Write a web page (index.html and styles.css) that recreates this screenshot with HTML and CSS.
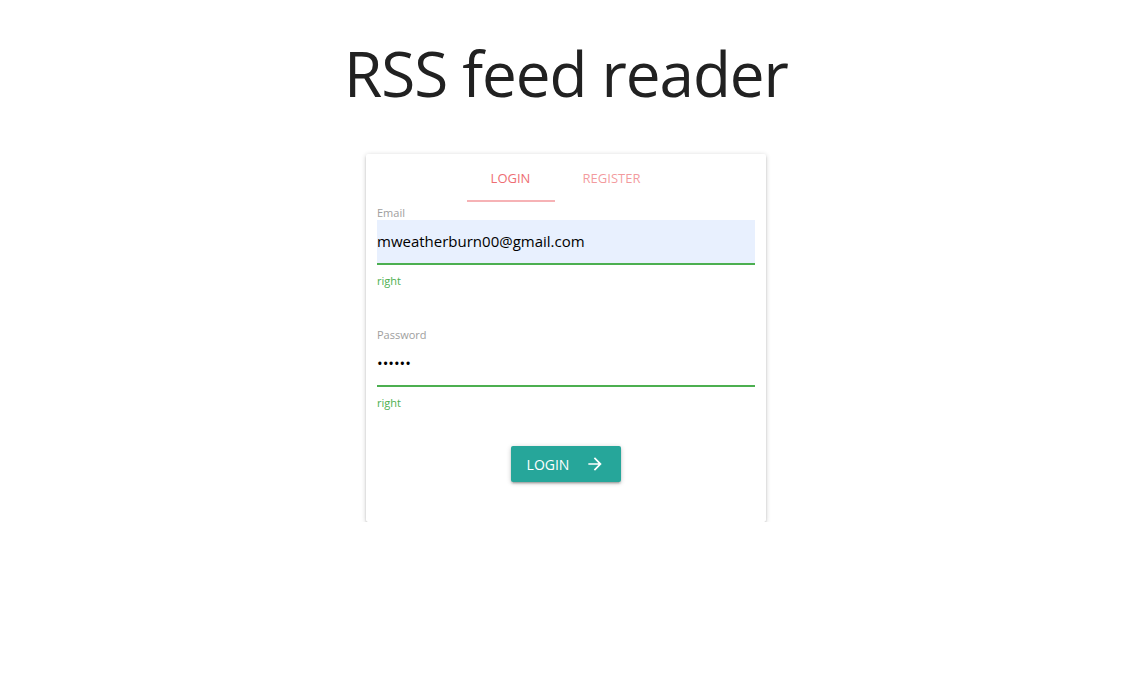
FILE: index.html
```html
<!DOCTYPE html>
<html>
<head>
<meta charset="utf-8">
<link rel="stylesheet" href="styles.css">
</head>
<body>
<main class="page">
  <h1 class="title">RSS feed reader</h1>
  <section class="card">
    <nav class="tabs">
      <div class="tab active">Login</div>
      <div class="tab">Register</div>
    </nav>
    <form class="form">
      <div class="field">
        <label class="label">Email</label>
        <div class="input autofill">mweatherburn00@gmail.com</div>
        <span class="helper">right</span>
      </div>
      <div class="field pw">
        <label class="label">Password</label>
        <div class="input dots">••••••</div>
        <span class="helper">right</span>
      </div>
      <div class="actions">
        <button type="button" class="btn">Login
          <svg class="arrow" viewBox="0 0 24 24" width="20" height="20"><path d="M12 4l-1.41 1.41L16.17 11H4v2h12.17l-5.58 5.59L12 20l8-8z" fill="#fff"/></svg>
        </button>
      </div>
    </form>
  </section>
</main>
</body>
</html>
```
FILE: styles.css
```css
html, body { margin: 0; padding: 0; background: #fff; }
body { font-family: "Open Sans", "Noto Sans", sans-serif; color: rgba(0,0,0,0.87); }
.page { display: flex; flex-direction: column; align-items: center; padding-right: 1px; }
.title {
  margin: 34px 0 0;
  font-size: 62px;
  font-weight: 400;
  line-height: 78px;
  height: 120px;
  letter-spacing: -1.05px;
  color: #212121;
}
.card {
  width: 400px;
  box-sizing: border-box;
  background: #fff;
  box-shadow: 0 2px 2px 0 rgba(0,0,0,0.14), 0 3px 1px -2px rgba(0,0,0,0.12), 0 1px 5px 0 rgba(0,0,0,0.2);
  border-radius: 2px;
  padding-bottom: 40px;
}
.tabs { display: flex; justify-content: center; height: 48px; padding-left: 3px; }
.tab {
  text-transform: uppercase;
  font-size: 13px;
  line-height: 48px;
  color: rgba(238,110,115,0.7);
  box-sizing: border-box;
  text-align: center;
  width: 114px;
}
.tab.active { color: #ee6e73; border-bottom: 2px solid #f6b2b5; width: 88px; }
.form { padding: 0 11px; }
.field { display: flex; flex-direction: column; }
.label { font-size: 11px; color: #9e9e9e; height: 16px; line-height: 16px; margin-top: 3px; }
.input {
  height: 43px;
  line-height: 43px;
  font-size: 15px;
  color: #000;
  border-bottom: 2px solid #4caf50;
  margin-top: -1px;
}
.autofill { background: #e8f0fe; }
.helper { font-size: 11px; color: #4caf50; height: 18px; line-height: 18px; margin-top: 7px; }
.field.pw { margin-top: 34px; }
.actions { display: flex; justify-content: center; margin-top: 34px; }
.btn {
  display: flex; align-items: center; gap: 16px;
  height: 36px; width: 110px; justify-content: center;
  background: #26a69a; color: #fff; border: none; border-radius: 2px;
  font-family: inherit; font-size: 14px; text-transform: uppercase; letter-spacing: 0;
  box-shadow: 0 2px 2px 0 rgba(0,0,0,0.14), 0 3px 1px -2px rgba(0,0,0,0.12), 0 1px 5px 0 rgba(0,0,0,0.2);
  padding: 0;
}
.arrow { display: block; }
```
